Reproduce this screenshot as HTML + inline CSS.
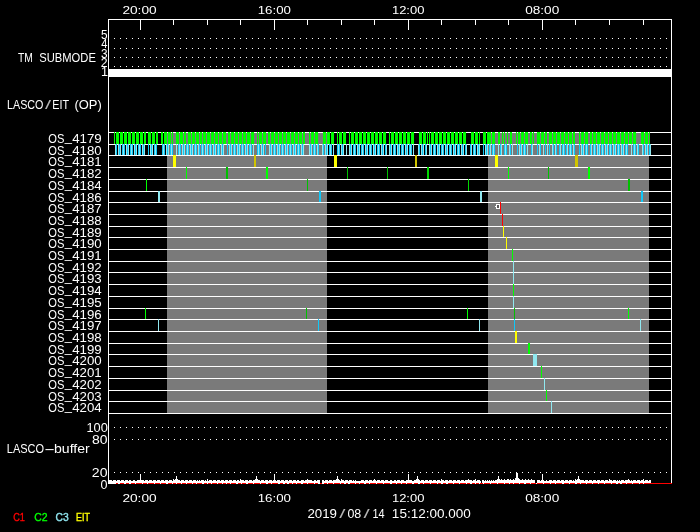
<!DOCTYPE html>
<html lang="en">
<head>
<meta charset="utf-8">
<title>LASCO/EIT operations timeline 2019/08/14</title>
<style>
html,body{margin:0;padding:0;background:#000;width:700px;height:532px;overflow:hidden}
svg text{white-space:pre}
</style>
</head>
<body>
<svg width="700" height="532" viewBox="0 0 700 532" style="display:block;position:absolute;left:0;top:0;will-change:transform">
<g shape-rendering="crispEdges">
<rect x="167" y="132" width="160" height="281" fill="#7a7a7a"/>
<rect x="488" y="132" width="161" height="281" fill="#7a7a7a"/>
<rect x="108" y="19" width="564" height="1" fill="#fff"/>
<rect x="108" y="19" width="1" height="465" fill="#fff"/>
<rect x="671" y="19" width="1" height="465" fill="#fff"/>
<rect x="140" y="19" width="1" height="11" fill="#fff"/>
<rect x="140" y="474" width="1" height="10" fill="#fff"/>
<rect x="173" y="19" width="1" height="6" fill="#fff"/>
<rect x="173" y="479" width="1" height="2" fill="#fff"/>
<rect x="207" y="19" width="1" height="6" fill="#fff"/>
<rect x="207" y="479" width="1" height="2" fill="#fff"/>
<rect x="240" y="19" width="1" height="6" fill="#fff"/>
<rect x="240" y="479" width="1" height="2" fill="#fff"/>
<rect x="274" y="19" width="1" height="11" fill="#fff"/>
<rect x="274" y="474" width="1" height="10" fill="#fff"/>
<rect x="307" y="19" width="1" height="6" fill="#fff"/>
<rect x="307" y="479" width="1" height="2" fill="#fff"/>
<rect x="341" y="19" width="1" height="6" fill="#fff"/>
<rect x="341" y="479" width="1" height="2" fill="#fff"/>
<rect x="374" y="19" width="1" height="6" fill="#fff"/>
<rect x="374" y="479" width="1" height="2" fill="#fff"/>
<rect x="408" y="19" width="1" height="11" fill="#fff"/>
<rect x="408" y="474" width="1" height="10" fill="#fff"/>
<rect x="441" y="19" width="1" height="6" fill="#fff"/>
<rect x="441" y="479" width="1" height="2" fill="#fff"/>
<rect x="475" y="19" width="1" height="6" fill="#fff"/>
<rect x="475" y="479" width="1" height="2" fill="#fff"/>
<rect x="508" y="19" width="1" height="6" fill="#fff"/>
<rect x="508" y="479" width="1" height="2" fill="#fff"/>
<rect x="542" y="19" width="1" height="11" fill="#fff"/>
<rect x="542" y="474" width="1" height="10" fill="#fff"/>
<rect x="575" y="19" width="1" height="6" fill="#fff"/>
<rect x="575" y="479" width="1" height="2" fill="#fff"/>
<rect x="609" y="19" width="1" height="6" fill="#fff"/>
<rect x="609" y="479" width="1" height="2" fill="#fff"/>
<rect x="643" y="19" width="1" height="6" fill="#fff"/>
<rect x="643" y="479" width="1" height="2" fill="#fff"/>
<path d="M114 38h1v1h-1zM120 38h1v1h-1zM126 38h1v1h-1zM132 38h1v1h-1zM138 38h1v1h-1zM144 38h1v1h-1zM150 38h1v1h-1zM156 38h1v1h-1zM162 38h1v1h-1zM168 38h1v1h-1zM174 38h1v1h-1zM180 38h1v1h-1zM186 38h1v1h-1zM192 38h1v1h-1zM198 38h1v1h-1zM204 38h1v1h-1zM210 38h1v1h-1zM216 38h1v1h-1zM222 38h1v1h-1zM228 38h1v1h-1zM234 38h1v1h-1zM240 38h1v1h-1zM246 38h1v1h-1zM252 38h1v1h-1zM258 38h1v1h-1zM264 38h1v1h-1zM270 38h1v1h-1zM276 38h1v1h-1zM282 38h1v1h-1zM288 38h1v1h-1zM294 38h1v1h-1zM300 38h1v1h-1zM306 38h1v1h-1zM312 38h1v1h-1zM318 38h1v1h-1zM324 38h1v1h-1zM330 38h1v1h-1zM336 38h1v1h-1zM342 38h1v1h-1zM348 38h1v1h-1zM354 38h1v1h-1zM360 38h1v1h-1zM366 38h1v1h-1zM372 38h1v1h-1zM378 38h1v1h-1zM384 38h1v1h-1zM390 38h1v1h-1zM396 38h1v1h-1zM402 38h1v1h-1zM408 38h1v1h-1zM414 38h1v1h-1zM420 38h1v1h-1zM426 38h1v1h-1zM432 38h1v1h-1zM438 38h1v1h-1zM444 38h1v1h-1zM450 38h1v1h-1zM456 38h1v1h-1zM462 38h1v1h-1zM468 38h1v1h-1zM474 38h1v1h-1zM480 38h1v1h-1zM486 38h1v1h-1zM492 38h1v1h-1zM498 38h1v1h-1zM504 38h1v1h-1zM510 38h1v1h-1zM516 38h1v1h-1zM522 38h1v1h-1zM528 38h1v1h-1zM534 38h1v1h-1zM540 38h1v1h-1zM546 38h1v1h-1zM552 38h1v1h-1zM558 38h1v1h-1zM564 38h1v1h-1zM570 38h1v1h-1zM576 38h1v1h-1zM582 38h1v1h-1zM588 38h1v1h-1zM594 38h1v1h-1zM600 38h1v1h-1zM606 38h1v1h-1zM612 38h1v1h-1zM618 38h1v1h-1zM624 38h1v1h-1zM630 38h1v1h-1zM636 38h1v1h-1zM642 38h1v1h-1zM648 38h1v1h-1zM654 38h1v1h-1zM660 38h1v1h-1zM666 38h1v1h-1z" fill="#fff"/>
<path d="M114 48h1v1h-1zM120 48h1v1h-1zM126 48h1v1h-1zM132 48h1v1h-1zM138 48h1v1h-1zM144 48h1v1h-1zM150 48h1v1h-1zM156 48h1v1h-1zM162 48h1v1h-1zM168 48h1v1h-1zM174 48h1v1h-1zM180 48h1v1h-1zM186 48h1v1h-1zM192 48h1v1h-1zM198 48h1v1h-1zM204 48h1v1h-1zM210 48h1v1h-1zM216 48h1v1h-1zM222 48h1v1h-1zM228 48h1v1h-1zM234 48h1v1h-1zM240 48h1v1h-1zM246 48h1v1h-1zM252 48h1v1h-1zM258 48h1v1h-1zM264 48h1v1h-1zM270 48h1v1h-1zM276 48h1v1h-1zM282 48h1v1h-1zM288 48h1v1h-1zM294 48h1v1h-1zM300 48h1v1h-1zM306 48h1v1h-1zM312 48h1v1h-1zM318 48h1v1h-1zM324 48h1v1h-1zM330 48h1v1h-1zM336 48h1v1h-1zM342 48h1v1h-1zM348 48h1v1h-1zM354 48h1v1h-1zM360 48h1v1h-1zM366 48h1v1h-1zM372 48h1v1h-1zM378 48h1v1h-1zM384 48h1v1h-1zM390 48h1v1h-1zM396 48h1v1h-1zM402 48h1v1h-1zM408 48h1v1h-1zM414 48h1v1h-1zM420 48h1v1h-1zM426 48h1v1h-1zM432 48h1v1h-1zM438 48h1v1h-1zM444 48h1v1h-1zM450 48h1v1h-1zM456 48h1v1h-1zM462 48h1v1h-1zM468 48h1v1h-1zM474 48h1v1h-1zM480 48h1v1h-1zM486 48h1v1h-1zM492 48h1v1h-1zM498 48h1v1h-1zM504 48h1v1h-1zM510 48h1v1h-1zM516 48h1v1h-1zM522 48h1v1h-1zM528 48h1v1h-1zM534 48h1v1h-1zM540 48h1v1h-1zM546 48h1v1h-1zM552 48h1v1h-1zM558 48h1v1h-1zM564 48h1v1h-1zM570 48h1v1h-1zM576 48h1v1h-1zM582 48h1v1h-1zM588 48h1v1h-1zM594 48h1v1h-1zM600 48h1v1h-1zM606 48h1v1h-1zM612 48h1v1h-1zM618 48h1v1h-1zM624 48h1v1h-1zM630 48h1v1h-1zM636 48h1v1h-1zM642 48h1v1h-1zM648 48h1v1h-1zM654 48h1v1h-1zM660 48h1v1h-1zM666 48h1v1h-1z" fill="#fff"/>
<path d="M114 57h1v1h-1zM120 57h1v1h-1zM126 57h1v1h-1zM132 57h1v1h-1zM138 57h1v1h-1zM144 57h1v1h-1zM150 57h1v1h-1zM156 57h1v1h-1zM162 57h1v1h-1zM168 57h1v1h-1zM174 57h1v1h-1zM180 57h1v1h-1zM186 57h1v1h-1zM192 57h1v1h-1zM198 57h1v1h-1zM204 57h1v1h-1zM210 57h1v1h-1zM216 57h1v1h-1zM222 57h1v1h-1zM228 57h1v1h-1zM234 57h1v1h-1zM240 57h1v1h-1zM246 57h1v1h-1zM252 57h1v1h-1zM258 57h1v1h-1zM264 57h1v1h-1zM270 57h1v1h-1zM276 57h1v1h-1zM282 57h1v1h-1zM288 57h1v1h-1zM294 57h1v1h-1zM300 57h1v1h-1zM306 57h1v1h-1zM312 57h1v1h-1zM318 57h1v1h-1zM324 57h1v1h-1zM330 57h1v1h-1zM336 57h1v1h-1zM342 57h1v1h-1zM348 57h1v1h-1zM354 57h1v1h-1zM360 57h1v1h-1zM366 57h1v1h-1zM372 57h1v1h-1zM378 57h1v1h-1zM384 57h1v1h-1zM390 57h1v1h-1zM396 57h1v1h-1zM402 57h1v1h-1zM408 57h1v1h-1zM414 57h1v1h-1zM420 57h1v1h-1zM426 57h1v1h-1zM432 57h1v1h-1zM438 57h1v1h-1zM444 57h1v1h-1zM450 57h1v1h-1zM456 57h1v1h-1zM462 57h1v1h-1zM468 57h1v1h-1zM474 57h1v1h-1zM480 57h1v1h-1zM486 57h1v1h-1zM492 57h1v1h-1zM498 57h1v1h-1zM504 57h1v1h-1zM510 57h1v1h-1zM516 57h1v1h-1zM522 57h1v1h-1zM528 57h1v1h-1zM534 57h1v1h-1zM540 57h1v1h-1zM546 57h1v1h-1zM552 57h1v1h-1zM558 57h1v1h-1zM564 57h1v1h-1zM570 57h1v1h-1zM576 57h1v1h-1zM582 57h1v1h-1zM588 57h1v1h-1zM594 57h1v1h-1zM600 57h1v1h-1zM606 57h1v1h-1zM612 57h1v1h-1zM618 57h1v1h-1zM624 57h1v1h-1zM630 57h1v1h-1zM636 57h1v1h-1zM642 57h1v1h-1zM648 57h1v1h-1zM654 57h1v1h-1zM660 57h1v1h-1zM666 57h1v1h-1z" fill="#fff"/>
<path d="M114 66h1v1h-1zM120 66h1v1h-1zM126 66h1v1h-1zM132 66h1v1h-1zM138 66h1v1h-1zM144 66h1v1h-1zM150 66h1v1h-1zM156 66h1v1h-1zM162 66h1v1h-1zM168 66h1v1h-1zM174 66h1v1h-1zM180 66h1v1h-1zM186 66h1v1h-1zM192 66h1v1h-1zM198 66h1v1h-1zM204 66h1v1h-1zM210 66h1v1h-1zM216 66h1v1h-1zM222 66h1v1h-1zM228 66h1v1h-1zM234 66h1v1h-1zM240 66h1v1h-1zM246 66h1v1h-1zM252 66h1v1h-1zM258 66h1v1h-1zM264 66h1v1h-1zM270 66h1v1h-1zM276 66h1v1h-1zM282 66h1v1h-1zM288 66h1v1h-1zM294 66h1v1h-1zM300 66h1v1h-1zM306 66h1v1h-1zM312 66h1v1h-1zM318 66h1v1h-1zM324 66h1v1h-1zM330 66h1v1h-1zM336 66h1v1h-1zM342 66h1v1h-1zM348 66h1v1h-1zM354 66h1v1h-1zM360 66h1v1h-1zM366 66h1v1h-1zM372 66h1v1h-1zM378 66h1v1h-1zM384 66h1v1h-1zM390 66h1v1h-1zM396 66h1v1h-1zM402 66h1v1h-1zM408 66h1v1h-1zM414 66h1v1h-1zM420 66h1v1h-1zM426 66h1v1h-1zM432 66h1v1h-1zM438 66h1v1h-1zM444 66h1v1h-1zM450 66h1v1h-1zM456 66h1v1h-1zM462 66h1v1h-1zM468 66h1v1h-1zM474 66h1v1h-1zM480 66h1v1h-1zM486 66h1v1h-1zM492 66h1v1h-1zM498 66h1v1h-1zM504 66h1v1h-1zM510 66h1v1h-1zM516 66h1v1h-1zM522 66h1v1h-1zM528 66h1v1h-1zM534 66h1v1h-1zM540 66h1v1h-1zM546 66h1v1h-1zM552 66h1v1h-1zM558 66h1v1h-1zM564 66h1v1h-1zM570 66h1v1h-1zM576 66h1v1h-1zM582 66h1v1h-1zM588 66h1v1h-1zM594 66h1v1h-1zM600 66h1v1h-1zM606 66h1v1h-1zM612 66h1v1h-1zM618 66h1v1h-1zM624 66h1v1h-1zM630 66h1v1h-1zM636 66h1v1h-1zM642 66h1v1h-1zM648 66h1v1h-1zM654 66h1v1h-1zM660 66h1v1h-1zM666 66h1v1h-1z" fill="#fff"/>
<path d="M114 427h1v1h-1zM120 427h1v1h-1zM126 427h1v1h-1zM132 427h1v1h-1zM138 427h1v1h-1zM144 427h1v1h-1zM150 427h1v1h-1zM156 427h1v1h-1zM162 427h1v1h-1zM168 427h1v1h-1zM174 427h1v1h-1zM180 427h1v1h-1zM186 427h1v1h-1zM192 427h1v1h-1zM198 427h1v1h-1zM204 427h1v1h-1zM210 427h1v1h-1zM216 427h1v1h-1zM222 427h1v1h-1zM228 427h1v1h-1zM234 427h1v1h-1zM240 427h1v1h-1zM246 427h1v1h-1zM252 427h1v1h-1zM258 427h1v1h-1zM264 427h1v1h-1zM270 427h1v1h-1zM276 427h1v1h-1zM282 427h1v1h-1zM288 427h1v1h-1zM294 427h1v1h-1zM300 427h1v1h-1zM306 427h1v1h-1zM312 427h1v1h-1zM318 427h1v1h-1zM324 427h1v1h-1zM330 427h1v1h-1zM336 427h1v1h-1zM342 427h1v1h-1zM348 427h1v1h-1zM354 427h1v1h-1zM360 427h1v1h-1zM366 427h1v1h-1zM372 427h1v1h-1zM378 427h1v1h-1zM384 427h1v1h-1zM390 427h1v1h-1zM396 427h1v1h-1zM402 427h1v1h-1zM408 427h1v1h-1zM414 427h1v1h-1zM420 427h1v1h-1zM426 427h1v1h-1zM432 427h1v1h-1zM438 427h1v1h-1zM444 427h1v1h-1zM450 427h1v1h-1zM456 427h1v1h-1zM462 427h1v1h-1zM468 427h1v1h-1zM474 427h1v1h-1zM480 427h1v1h-1zM486 427h1v1h-1zM492 427h1v1h-1zM498 427h1v1h-1zM504 427h1v1h-1zM510 427h1v1h-1zM516 427h1v1h-1zM522 427h1v1h-1zM528 427h1v1h-1zM534 427h1v1h-1zM540 427h1v1h-1zM546 427h1v1h-1zM552 427h1v1h-1zM558 427h1v1h-1zM564 427h1v1h-1zM570 427h1v1h-1zM576 427h1v1h-1zM582 427h1v1h-1zM588 427h1v1h-1zM594 427h1v1h-1zM600 427h1v1h-1zM606 427h1v1h-1zM612 427h1v1h-1zM618 427h1v1h-1zM624 427h1v1h-1zM630 427h1v1h-1zM636 427h1v1h-1zM642 427h1v1h-1zM648 427h1v1h-1zM654 427h1v1h-1zM660 427h1v1h-1zM666 427h1v1h-1z" fill="#fff"/>
<path d="M114 439h1v1h-1zM120 439h1v1h-1zM126 439h1v1h-1zM132 439h1v1h-1zM138 439h1v1h-1zM144 439h1v1h-1zM150 439h1v1h-1zM156 439h1v1h-1zM162 439h1v1h-1zM168 439h1v1h-1zM174 439h1v1h-1zM180 439h1v1h-1zM186 439h1v1h-1zM192 439h1v1h-1zM198 439h1v1h-1zM204 439h1v1h-1zM210 439h1v1h-1zM216 439h1v1h-1zM222 439h1v1h-1zM228 439h1v1h-1zM234 439h1v1h-1zM240 439h1v1h-1zM246 439h1v1h-1zM252 439h1v1h-1zM258 439h1v1h-1zM264 439h1v1h-1zM270 439h1v1h-1zM276 439h1v1h-1zM282 439h1v1h-1zM288 439h1v1h-1zM294 439h1v1h-1zM300 439h1v1h-1zM306 439h1v1h-1zM312 439h1v1h-1zM318 439h1v1h-1zM324 439h1v1h-1zM330 439h1v1h-1zM336 439h1v1h-1zM342 439h1v1h-1zM348 439h1v1h-1zM354 439h1v1h-1zM360 439h1v1h-1zM366 439h1v1h-1zM372 439h1v1h-1zM378 439h1v1h-1zM384 439h1v1h-1zM390 439h1v1h-1zM396 439h1v1h-1zM402 439h1v1h-1zM408 439h1v1h-1zM414 439h1v1h-1zM420 439h1v1h-1zM426 439h1v1h-1zM432 439h1v1h-1zM438 439h1v1h-1zM444 439h1v1h-1zM450 439h1v1h-1zM456 439h1v1h-1zM462 439h1v1h-1zM468 439h1v1h-1zM474 439h1v1h-1zM480 439h1v1h-1zM486 439h1v1h-1zM492 439h1v1h-1zM498 439h1v1h-1zM504 439h1v1h-1zM510 439h1v1h-1zM516 439h1v1h-1zM522 439h1v1h-1zM528 439h1v1h-1zM534 439h1v1h-1zM540 439h1v1h-1zM546 439h1v1h-1zM552 439h1v1h-1zM558 439h1v1h-1zM564 439h1v1h-1zM570 439h1v1h-1zM576 439h1v1h-1zM582 439h1v1h-1zM588 439h1v1h-1zM594 439h1v1h-1zM600 439h1v1h-1zM606 439h1v1h-1zM612 439h1v1h-1zM618 439h1v1h-1zM624 439h1v1h-1zM630 439h1v1h-1zM636 439h1v1h-1zM642 439h1v1h-1zM648 439h1v1h-1zM654 439h1v1h-1zM660 439h1v1h-1zM666 439h1v1h-1z" fill="#fff"/>
<path d="M114 472h1v1h-1zM120 472h1v1h-1zM126 472h1v1h-1zM132 472h1v1h-1zM138 472h1v1h-1zM144 472h1v1h-1zM150 472h1v1h-1zM156 472h1v1h-1zM162 472h1v1h-1zM168 472h1v1h-1zM174 472h1v1h-1zM180 472h1v1h-1zM186 472h1v1h-1zM192 472h1v1h-1zM198 472h1v1h-1zM204 472h1v1h-1zM210 472h1v1h-1zM216 472h1v1h-1zM222 472h1v1h-1zM228 472h1v1h-1zM234 472h1v1h-1zM240 472h1v1h-1zM246 472h1v1h-1zM252 472h1v1h-1zM258 472h1v1h-1zM264 472h1v1h-1zM270 472h1v1h-1zM276 472h1v1h-1zM282 472h1v1h-1zM288 472h1v1h-1zM294 472h1v1h-1zM300 472h1v1h-1zM306 472h1v1h-1zM312 472h1v1h-1zM318 472h1v1h-1zM324 472h1v1h-1zM330 472h1v1h-1zM336 472h1v1h-1zM342 472h1v1h-1zM348 472h1v1h-1zM354 472h1v1h-1zM360 472h1v1h-1zM366 472h1v1h-1zM372 472h1v1h-1zM378 472h1v1h-1zM384 472h1v1h-1zM390 472h1v1h-1zM396 472h1v1h-1zM402 472h1v1h-1zM408 472h1v1h-1zM414 472h1v1h-1zM420 472h1v1h-1zM426 472h1v1h-1zM432 472h1v1h-1zM438 472h1v1h-1zM444 472h1v1h-1zM450 472h1v1h-1zM456 472h1v1h-1zM462 472h1v1h-1zM468 472h1v1h-1zM474 472h1v1h-1zM480 472h1v1h-1zM486 472h1v1h-1zM492 472h1v1h-1zM498 472h1v1h-1zM504 472h1v1h-1zM510 472h1v1h-1zM516 472h1v1h-1zM522 472h1v1h-1zM528 472h1v1h-1zM534 472h1v1h-1zM540 472h1v1h-1zM546 472h1v1h-1zM552 472h1v1h-1zM558 472h1v1h-1zM564 472h1v1h-1zM570 472h1v1h-1zM576 472h1v1h-1zM582 472h1v1h-1zM588 472h1v1h-1zM594 472h1v1h-1zM600 472h1v1h-1zM606 472h1v1h-1zM612 472h1v1h-1zM618 472h1v1h-1zM624 472h1v1h-1zM630 472h1v1h-1zM636 472h1v1h-1zM642 472h1v1h-1zM648 472h1v1h-1zM654 472h1v1h-1zM660 472h1v1h-1zM666 472h1v1h-1z" fill="#fff"/>
<rect x="108" y="69" width="564" height="8" fill="#fff"/>
<rect x="108" y="132" width="564" height="1" fill="#fff"/>
<rect x="108" y="144" width="564" height="1" fill="#fff"/>
<rect x="108" y="155" width="564" height="1" fill="#fff"/>
<rect x="108" y="167" width="564" height="1" fill="#fff"/>
<rect x="108" y="179" width="564" height="1" fill="#fff"/>
<rect x="108" y="191" width="564" height="1" fill="#fff"/>
<rect x="108" y="202" width="564" height="1" fill="#fff"/>
<rect x="108" y="214" width="564" height="1" fill="#fff"/>
<rect x="108" y="226" width="564" height="1" fill="#fff"/>
<rect x="108" y="237" width="564" height="1" fill="#fff"/>
<rect x="108" y="249" width="564" height="1" fill="#fff"/>
<rect x="108" y="261" width="564" height="1" fill="#fff"/>
<rect x="108" y="272" width="564" height="1" fill="#fff"/>
<rect x="108" y="284" width="564" height="1" fill="#fff"/>
<rect x="108" y="296" width="564" height="1" fill="#fff"/>
<rect x="108" y="308" width="564" height="1" fill="#fff"/>
<rect x="108" y="319" width="564" height="1" fill="#fff"/>
<rect x="108" y="331" width="564" height="1" fill="#fff"/>
<rect x="108" y="343" width="564" height="1" fill="#fff"/>
<rect x="108" y="354" width="564" height="1" fill="#fff"/>
<rect x="108" y="366" width="564" height="1" fill="#fff"/>
<rect x="108" y="378" width="564" height="1" fill="#fff"/>
<rect x="108" y="390" width="564" height="1" fill="#fff"/>
<rect x="108" y="401" width="564" height="1" fill="#fff"/>
<rect x="108" y="413" width="564" height="1" fill="#fff"/>
<path d="M114 132h1v12h-1zM116 132h3v12h-3zM120 132h3v12h-3zM124 132h3v12h-3zM128 132h3v12h-3zM132 132h3v12h-3zM136 132h3v12h-3zM140 132h3v12h-3zM144 132h2v12h-2zM148 132h3v12h-3zM152 132h3v12h-3zM156 132h2v12h-2zM161 132h2v12h-2zM164 132h3v12h-3zM168 132h3v12h-3zM172 132h1v12h-1zM176 132h3v12h-3zM180 132h3v12h-3zM184 132h2v12h-2zM188 132h3v12h-3zM192 132h3v12h-3zM196 132h3v12h-3zM200 132h2v12h-2zM203 132h3v12h-3zM207 132h3v12h-3zM211 132h3v12h-3zM215 132h3v12h-3zM219 132h3v12h-3zM223 132h3v12h-3zM228 132h2v12h-2zM231 132h3v12h-3zM235 132h3v12h-3zM239 132h3v12h-3zM243 132h3v12h-3zM247 132h3v12h-3zM251 132h3v12h-3zM257 132h1v12h-1zM259 132h3v12h-3zM263 132h3v12h-3zM268 132h2v12h-2zM271 132h3v12h-3zM275 132h3v12h-3zM279 132h3v12h-3zM283 132h3v12h-3zM287 132h3v12h-3zM291 132h3v12h-3zM295 132h3v12h-3zM299 132h3v12h-3zM303 132h2v12h-2zM309 132h1v12h-1zM311 132h3v12h-3zM315 132h3v12h-3zM323 132h3v12h-3zM327 132h3v12h-3zM331 132h3v12h-3zM337 132h1v12h-1zM339 132h3v12h-3zM343 132h3v12h-3zM349 132h1v12h-1zM351 132h3v12h-3zM355 132h3v12h-3zM359 132h3v12h-3zM363 132h3v12h-3zM367 132h3v12h-3zM371 132h3v12h-3zM375 132h3v12h-3zM379 132h3v12h-3zM383 132h3v12h-3zM389 132h1v12h-1zM391 132h3v12h-3zM395 132h3v12h-3zM399 132h3v12h-3zM403 132h3v12h-3zM407 132h3v12h-3zM411 132h3v12h-3zM419 132h3v12h-3zM423 132h3v12h-3zM427 132h1v12h-1zM429 132h1v12h-1zM431 132h3v12h-3zM435 132h3v12h-3zM439 132h3v12h-3zM443 132h3v12h-3zM447 132h3v12h-3zM451 132h3v12h-3zM455 132h3v12h-3zM459 132h3v12h-3zM463 132h3v12h-3zM471 132h3v12h-3zM475 132h3v12h-3zM479 132h1v12h-1zM483 132h3v12h-3zM487 132h4v12h-4zM492 132h3v12h-3zM498 132h2v12h-2zM502 132h1v12h-1zM504 132h1v12h-1zM507 132h1v12h-1zM510 132h2v12h-2zM516 132h1v12h-1zM518 132h2v12h-2zM521 132h3v12h-3zM525 132h3v12h-3zM530 132h2v12h-2zM533 132h1v12h-1zM537 132h3v12h-3zM541 132h3v12h-3zM545 132h2v12h-2zM549 132h3v12h-3zM553 132h3v12h-3zM557 132h3v12h-3zM561 132h3v12h-3zM565 132h3v12h-3zM569 132h3v12h-3zM573 132h2v12h-2zM579 132h1v12h-1zM581 132h3v12h-3zM585 132h3v12h-3zM590 132h2v12h-2zM593 132h3v12h-3zM597 132h3v12h-3zM601 132h3v12h-3zM605 132h3v12h-3zM609 132h3v12h-3zM613 132h3v12h-3zM617 132h3v12h-3zM621 132h3v12h-3zM625 132h3v12h-3zM629 132h3v12h-3zM633 132h3v12h-3zM641 132h3v12h-3zM645 132h3v12h-3zM649 132h1v12h-1z" fill="#00ff00"/>
<path d="M115 144h1v11h-1zM118 144h1v11h-1zM120 144h1v11h-1zM123 144h1v11h-1zM126 144h1v11h-1zM128 144h1v11h-1zM131 144h1v11h-1zM134 144h1v11h-1zM136 144h1v11h-1zM139 144h1v11h-1zM142 144h1v11h-1zM144 144h1v11h-1zM150 144h1v11h-1zM152 144h1v11h-1zM155 144h1v11h-1zM163 144h1v11h-1zM166 144h1v11h-1zM168 144h1v11h-1zM171 144h1v11h-1zM176 144h1v11h-1zM179 144h1v11h-1zM182 144h1v11h-1zM184 144h1v11h-1zM187 144h1v11h-1zM190 144h1v11h-1zM192 144h1v11h-1zM195 144h1v11h-1zM198 144h1v11h-1zM202 144h1v11h-1zM205 144h1v11h-1zM207 144h1v11h-1zM210 144h1v11h-1zM213 144h1v11h-1zM215 144h1v11h-1zM218 144h1v11h-1zM221 144h1v11h-1zM223 144h1v11h-1zM229 144h1v11h-1zM231 144h1v11h-1zM234 144h1v11h-1zM237 144h1v11h-1zM239 144h1v11h-1zM242 144h1v11h-1zM245 144h1v11h-1zM247 144h1v11h-1zM250 144h1v11h-1zM253 144h1v11h-1zM258 144h1v11h-1zM261 144h1v11h-1zM263 144h1v11h-1zM269 144h1v11h-1zM271 144h1v11h-1zM274 144h1v11h-1zM277 144h1v11h-1zM279 144h1v11h-1zM282 144h1v11h-1zM285 144h1v11h-1zM287 144h1v11h-1zM290 144h1v11h-1zM293 144h1v11h-1zM295 144h1v11h-1zM298 144h1v11h-1zM301 144h1v11h-1zM303 144h1v11h-1zM309 144h1v11h-1zM311 144h1v11h-1zM314 144h1v11h-1zM317 144h1v11h-1zM322 144h1v11h-1zM325 144h1v11h-1zM327 144h1v11h-1zM330 144h1v11h-1zM333 144h1v11h-1zM338 144h1v11h-1zM341 144h1v11h-1zM343 144h1v11h-1zM346 144h1v11h-1zM349 144h1v11h-1zM351 144h1v11h-1zM354 144h1v11h-1zM357 144h1v11h-1zM359 144h1v11h-1zM362 144h1v11h-1zM365 144h1v11h-1zM367 144h1v11h-1zM370 144h1v11h-1zM373 144h1v11h-1zM375 144h1v11h-1zM378 144h1v11h-1zM381 144h1v11h-1zM383 144h1v11h-1zM386 144h1v11h-1zM389 144h1v11h-1zM391 144h1v11h-1zM394 144h1v11h-1zM397 144h1v11h-1zM399 144h1v11h-1zM402 144h1v11h-1zM405 144h1v11h-1zM407 144h1v11h-1zM410 144h1v11h-1zM413 144h1v11h-1zM418 144h1v11h-1zM421 144h1v11h-1zM423 144h1v11h-1zM426 144h1v11h-1zM429 144h1v11h-1zM431 144h1v11h-1zM434 144h1v11h-1zM437 144h1v11h-1zM439 144h1v11h-1zM442 144h1v11h-1zM445 144h1v11h-1zM447 144h1v11h-1zM450 144h1v11h-1zM453 144h1v11h-1zM455 144h1v11h-1zM458 144h1v11h-1zM461 144h1v11h-1zM463 144h1v11h-1zM466 144h1v11h-1zM471 144h1v11h-1zM474 144h1v11h-1zM477 144h1v11h-1zM479 144h1v11h-1zM485 144h1v11h-1zM487 144h1v11h-1zM490 144h1v11h-1zM493 144h1v11h-1zM498 144h1v11h-1zM501 144h1v11h-1zM505 144h1v11h-1zM509 144h1v11h-1zM512 144h1v11h-1zM519 144h1v11h-1zM521 144h1v11h-1zM524 144h1v11h-1zM527 144h1v11h-1zM532 144h1v11h-1zM539 144h1v11h-1zM543 144h1v11h-1zM547 144h1v11h-1zM552 144h1v11h-1zM555 144h1v11h-1zM560 144h1v11h-1zM563 144h1v11h-1zM567 144h1v11h-1zM570 144h1v11h-1zM573 144h1v11h-1zM581 144h1v11h-1zM583 144h1v11h-1zM586 144h1v11h-1zM591 144h1v11h-1zM594 144h1v11h-1zM597 144h1v11h-1zM599 144h1v11h-1zM602 144h1v11h-1zM605 144h1v11h-1zM607 144h1v11h-1zM610 144h1v11h-1zM613 144h1v11h-1zM615 144h1v11h-1zM618 144h1v11h-1zM621 144h1v11h-1zM623 144h1v11h-1zM626 144h1v11h-1zM631 144h1v11h-1zM634 144h1v11h-1zM637 144h1v11h-1zM642 144h1v11h-1zM645 144h1v11h-1zM647 144h1v11h-1zM650 144h1v11h-1z" fill="#90e8f0"/>
<path d="M116 144h1v11h-1zM119 144h1v11h-1zM122 144h1v11h-1zM124 144h1v11h-1zM127 144h1v11h-1zM130 144h1v11h-1zM132 144h1v11h-1zM135 144h1v11h-1zM138 144h1v11h-1zM140 144h1v11h-1zM143 144h1v11h-1zM148 144h1v11h-1zM151 144h1v11h-1zM154 144h1v11h-1zM156 144h1v11h-1zM162 144h1v11h-1zM164 144h1v11h-1zM167 144h1v11h-1zM170 144h1v11h-1zM172 144h1v11h-1zM178 144h1v11h-1zM180 144h1v11h-1zM183 144h1v11h-1zM186 144h1v11h-1zM188 144h1v11h-1zM191 144h1v11h-1zM194 144h1v11h-1zM196 144h1v11h-1zM199 144h1v11h-1zM201 144h1v11h-1zM203 144h1v11h-1zM206 144h1v11h-1zM209 144h1v11h-1zM211 144h1v11h-1zM214 144h1v11h-1zM217 144h1v11h-1zM219 144h1v11h-1zM222 144h1v11h-1zM227 144h1v11h-1zM230 144h1v11h-1zM233 144h1v11h-1zM235 144h1v11h-1zM238 144h1v11h-1zM241 144h1v11h-1zM243 144h1v11h-1zM246 144h1v11h-1zM249 144h1v11h-1zM251 144h1v11h-1zM257 144h1v11h-1zM259 144h1v11h-1zM262 144h1v11h-1zM265 144h1v11h-1zM270 144h1v11h-1zM273 144h1v11h-1zM275 144h1v11h-1zM278 144h1v11h-1zM281 144h1v11h-1zM283 144h1v11h-1zM286 144h1v11h-1zM289 144h1v11h-1zM291 144h1v11h-1zM294 144h1v11h-1zM297 144h1v11h-1zM299 144h1v11h-1zM302 144h1v11h-1zM310 144h1v11h-1zM313 144h1v11h-1zM315 144h1v11h-1zM318 144h1v11h-1zM323 144h1v11h-1zM326 144h1v11h-1zM329 144h1v11h-1zM331 144h1v11h-1zM337 144h1v11h-1zM339 144h1v11h-1zM342 144h1v11h-1zM350 144h1v11h-1zM353 144h1v11h-1zM355 144h1v11h-1zM358 144h1v11h-1zM361 144h1v11h-1zM363 144h1v11h-1zM366 144h1v11h-1zM369 144h1v11h-1zM371 144h1v11h-1zM374 144h1v11h-1zM377 144h1v11h-1zM379 144h1v11h-1zM382 144h1v11h-1zM385 144h1v11h-1zM390 144h1v11h-1zM393 144h1v11h-1zM395 144h1v11h-1zM398 144h1v11h-1zM401 144h1v11h-1zM403 144h1v11h-1zM406 144h1v11h-1zM409 144h1v11h-1zM411 144h1v11h-1zM419 144h1v11h-1zM422 144h1v11h-1zM425 144h1v11h-1zM430 144h1v11h-1zM433 144h1v11h-1zM435 144h1v11h-1zM438 144h1v11h-1zM441 144h1v11h-1zM443 144h1v11h-1zM446 144h1v11h-1zM449 144h1v11h-1zM451 144h1v11h-1zM454 144h1v11h-1zM457 144h1v11h-1zM459 144h1v11h-1zM462 144h1v11h-1zM465 144h1v11h-1zM470 144h1v11h-1zM473 144h1v11h-1zM475 144h1v11h-1zM478 144h1v11h-1zM483 144h1v11h-1zM486 144h1v11h-1zM489 144h1v11h-1zM492 144h1v11h-1zM494 144h1v11h-1zM500 144h1v11h-1zM504 144h1v11h-1zM506 144h1v11h-1zM510 144h1v11h-1zM517 144h1v11h-1zM520 144h1v11h-1zM523 144h1v11h-1zM525 144h1v11h-1zM531 144h1v11h-1zM537 144h1v11h-1zM540 144h1v11h-1zM545 144h1v11h-1zM549 144h1v11h-1zM553 144h1v11h-1zM556 144h1v11h-1zM559 144h1v11h-1zM562 144h1v11h-1zM564 144h1v11h-1zM566 144h1v11h-1zM569 144h1v11h-1zM571 144h1v11h-1zM574 144h1v11h-1zM579 144h1v11h-1zM582 144h1v11h-1zM585 144h1v11h-1zM587 144h1v11h-1zM590 144h1v11h-1zM593 144h1v11h-1zM595 144h1v11h-1zM598 144h1v11h-1zM601 144h1v11h-1zM603 144h1v11h-1zM606 144h1v11h-1zM609 144h1v11h-1zM611 144h1v11h-1zM614 144h1v11h-1zM617 144h1v11h-1zM619 144h1v11h-1zM622 144h1v11h-1zM625 144h1v11h-1zM627 144h1v11h-1zM633 144h1v11h-1zM635 144h1v11h-1zM638 144h1v11h-1zM643 144h1v11h-1zM646 144h1v11h-1zM649 144h1v11h-1z" fill="#10c8f8"/>
<rect x="173" y="155" width="3" height="12" fill="#ffff00"/>
<rect x="254" y="155" width="2" height="12" fill="#d0c400"/>
<rect x="334" y="155" width="3" height="12" fill="#ffff00"/>
<rect x="415" y="155" width="2" height="12" fill="#d0c400"/>
<rect x="495" y="155" width="3" height="12" fill="#ffff00"/>
<rect x="575" y="155" width="3" height="12" fill="#d0c400"/>
<rect x="186" y="167" width="1" height="12" fill="#00ff00"/>
<rect x="226" y="167" width="2" height="12" fill="#00c000"/>
<rect x="266" y="167" width="2" height="12" fill="#00ff00"/>
<rect x="347" y="167" width="1" height="12" fill="#00c000"/>
<rect x="387" y="167" width="1" height="12" fill="#00c000"/>
<rect x="427" y="167" width="2" height="12" fill="#00d800"/>
<rect x="508" y="167" width="1" height="12" fill="#00ff00"/>
<rect x="548" y="167" width="1" height="12" fill="#00c000"/>
<rect x="588" y="167" width="2" height="12" fill="#00ff00"/>
<rect x="146" y="179" width="1" height="12" fill="#00ff00"/>
<rect x="307" y="179" width="1" height="12" fill="#00c000"/>
<rect x="468" y="179" width="1" height="12" fill="#00d800"/>
<rect x="628" y="179" width="2" height="12" fill="#00c000"/>
<rect x="158" y="191" width="2" height="11" fill="#90e8f0"/>
<rect x="319" y="191" width="2" height="11" fill="#10c8f8"/>
<rect x="480" y="191" width="2" height="11" fill="#90e8f0"/>
<rect x="641" y="191" width="2" height="11" fill="#10c8f8"/>
<rect x="500" y="202" width="1" height="12" fill="#ff0000"/>
<rect x="502" y="214" width="1" height="12" fill="#ff0000"/>
<rect x="503" y="226" width="1" height="11" fill="#ffff00"/>
<rect x="506" y="237" width="1" height="12" fill="#ffff00"/>
<rect x="512" y="249" width="1" height="12" fill="#00ff00"/>
<rect x="513" y="261" width="1" height="11" fill="#90e8f0"/>
<rect x="513" y="272" width="1" height="12" fill="#90e8f0"/>
<rect x="513" y="284" width="1" height="12" fill="#00ff00"/>
<rect x="513" y="296" width="1" height="12" fill="#90e8f0"/>
<rect x="514" y="308" width="1" height="11" fill="#00c000"/>
<rect x="514" y="319" width="1" height="12" fill="#10c8f8"/>
<rect x="515" y="331" width="2" height="12" fill="#ffff00"/>
<rect x="528" y="343" width="2" height="11" fill="#00ff00"/>
<rect x="533" y="354" width="4" height="12" fill="#90e8f0"/>
<rect x="541" y="366" width="1" height="12" fill="#00ff00"/>
<rect x="544" y="378" width="1" height="12" fill="#90e8f0"/>
<rect x="546" y="390" width="1" height="11" fill="#00ff00"/>
<rect x="551" y="401" width="1" height="12" fill="#90e8f0"/>
<rect x="145" y="308" width="1" height="11" fill="#00ff00"/>
<rect x="306" y="308" width="1" height="11" fill="#00c000"/>
<rect x="467" y="308" width="1" height="11" fill="#00ff00"/>
<rect x="628" y="308" width="1" height="11" fill="#00ff00"/>
<rect x="158" y="319" width="1" height="12" fill="#90e8f0"/>
<rect x="318" y="319" width="1" height="12" fill="#10c8f8"/>
<rect x="479" y="319" width="1" height="12" fill="#90e8f0"/>
<rect x="640" y="319" width="1" height="12" fill="#90e8f0"/>
<path d="M496 204h4v5h-4z M495 206h1v1h-1z" fill="#fff"/>
<path d="M497 205h2v3h-2z" fill="#5a5a5a"/>
<path d="M109 480h1v3h-1zM110 480h1v3h-1zM111 480h1v3h-1zM112 481h1v2h-1zM113 480h1v3h-1zM114 480h1v3h-1zM115 480h1v3h-1zM116 481h1v2h-1zM117 480h1v3h-1zM118 480h1v3h-1zM119 480h1v3h-1zM120 481h1v2h-1zM121 480h1v3h-1zM122 480h1v3h-1zM123 480h1v3h-1zM124 481h1v2h-1zM125 480h1v3h-1zM126 480h1v3h-1zM127 480h1v3h-1zM128 481h1v2h-1zM129 480h1v3h-1zM130 480h1v3h-1zM131 481h1v2h-1zM132 481h1v2h-1zM133 480h1v3h-1zM134 480h1v3h-1zM135 481h1v2h-1zM136 481h1v2h-1zM137 480h1v3h-1zM138 480h1v3h-1zM139 480h1v3h-1zM140 481h1v2h-1zM141 480h1v3h-1zM142 480h1v3h-1zM143 480h1v3h-1zM144 481h1v2h-1zM145 480h1v3h-1zM146 480h1v3h-1zM147 480h1v3h-1zM148 481h1v2h-1zM149 480h1v3h-1zM150 480h1v3h-1zM151 480h1v3h-1zM152 481h1v2h-1zM153 480h1v3h-1zM154 480h1v3h-1zM155 480h1v3h-1zM156 481h1v2h-1zM157 480h1v3h-1zM158 480h1v3h-1zM159 480h1v3h-1zM160 481h1v2h-1zM161 480h1v3h-1zM162 480h1v3h-1zM163 480h1v3h-1zM164 481h1v2h-1zM165 480h1v3h-1zM166 480h1v3h-1zM167 480h1v3h-1zM168 481h1v2h-1zM169 480h1v3h-1zM170 480h1v3h-1zM171 480h1v3h-1zM172 481h1v2h-1zM173 480h1v3h-1zM174 480h1v3h-1zM175 479h1v4h-1zM176 476h1v7h-1zM177 479h1v4h-1zM178 480h1v3h-1zM179 480h1v3h-1zM180 481h1v2h-1zM181 480h1v3h-1zM182 480h1v3h-1zM183 480h1v3h-1zM184 481h1v2h-1zM185 480h1v3h-1zM186 480h1v3h-1zM187 480h1v3h-1zM188 481h1v2h-1zM189 480h1v3h-1zM190 480h1v3h-1zM191 480h1v3h-1zM192 481h1v2h-1zM193 480h1v3h-1zM194 480h1v3h-1zM195 480h1v3h-1zM196 481h1v2h-1zM197 480h1v3h-1zM198 481h1v2h-1zM199 480h1v3h-1zM200 481h1v2h-1zM201 480h1v3h-1zM202 480h1v3h-1zM203 480h1v3h-1zM204 481h1v2h-1zM205 480h1v3h-1zM206 481h1v2h-1zM207 480h1v3h-1zM208 481h1v2h-1zM209 480h1v3h-1zM210 480h1v3h-1zM211 480h1v3h-1zM212 481h1v2h-1zM213 480h1v3h-1zM214 480h1v3h-1zM215 480h1v3h-1zM216 481h1v2h-1zM217 480h1v3h-1zM218 480h1v3h-1zM219 480h1v3h-1zM220 481h1v2h-1zM221 480h1v3h-1zM222 480h1v3h-1zM223 480h1v3h-1zM224 481h1v2h-1zM225 480h1v3h-1zM226 480h1v3h-1zM227 480h1v3h-1zM228 481h1v2h-1zM229 480h1v3h-1zM230 480h1v3h-1zM231 480h1v3h-1zM232 481h1v2h-1zM233 480h1v3h-1zM234 480h1v3h-1zM235 480h1v3h-1zM236 481h1v2h-1zM237 480h1v3h-1zM238 480h1v3h-1zM239 481h1v2h-1zM240 481h1v2h-1zM241 480h1v3h-1zM242 480h1v3h-1zM243 480h1v3h-1zM244 481h1v2h-1zM245 480h1v3h-1zM246 480h1v3h-1zM247 480h1v3h-1zM248 481h1v2h-1zM249 480h1v3h-1zM250 480h1v3h-1zM251 480h1v3h-1zM252 481h1v2h-1zM253 480h1v3h-1zM254 480h1v3h-1zM255 479h1v4h-1zM256 476h1v7h-1zM257 479h1v4h-1zM258 480h1v3h-1zM259 480h1v3h-1zM260 481h1v2h-1zM261 480h1v3h-1zM262 480h1v3h-1zM263 480h1v3h-1zM264 481h1v2h-1zM265 480h1v3h-1zM266 480h1v3h-1zM267 480h1v3h-1zM268 481h1v2h-1zM269 480h1v3h-1zM270 480h1v3h-1zM271 480h1v3h-1zM272 481h1v2h-1zM273 480h1v3h-1zM274 480h1v3h-1zM275 480h1v3h-1zM276 481h1v2h-1zM277 480h1v3h-1zM278 480h1v3h-1zM279 480h1v3h-1zM280 481h1v2h-1zM281 480h1v3h-1zM282 480h1v3h-1zM283 480h1v3h-1zM284 481h1v2h-1zM285 480h1v3h-1zM286 480h1v3h-1zM287 480h1v3h-1zM288 481h1v2h-1zM289 480h1v3h-1zM290 480h1v3h-1zM291 480h1v3h-1zM292 481h1v2h-1zM293 480h1v3h-1zM294 480h1v3h-1zM295 480h1v3h-1zM296 481h1v2h-1zM297 480h1v3h-1zM298 480h1v3h-1zM299 481h1v2h-1zM300 481h1v2h-1zM301 480h1v3h-1zM302 480h1v3h-1zM303 480h1v3h-1zM304 481h1v2h-1zM305 480h1v3h-1zM306 480h1v3h-1zM307 479h1v4h-1zM308 480h1v3h-1zM309 480h1v3h-1zM310 480h1v3h-1zM311 480h1v3h-1zM312 481h1v2h-1zM313 481h1v2h-1zM314 480h1v3h-1zM315 480h1v3h-1zM316 481h1v2h-1zM317 480h1v3h-1zM318 480h1v3h-1zM319 480h1v3h-1zM322 480h1v3h-1zM323 480h1v3h-1zM324 481h1v2h-1zM325 480h1v3h-1zM326 480h1v3h-1zM327 480h1v3h-1zM328 481h1v2h-1zM329 480h1v3h-1zM330 480h1v3h-1zM331 480h1v3h-1zM332 481h1v2h-1zM333 480h1v3h-1zM334 480h1v3h-1zM335 480h1v3h-1zM336 479h1v4h-1zM337 476h1v7h-1zM338 479h1v4h-1zM339 480h1v3h-1zM340 481h1v2h-1zM341 480h1v3h-1zM342 480h1v3h-1zM343 480h1v3h-1zM344 481h1v2h-1zM345 480h1v3h-1zM346 480h1v3h-1zM347 480h1v3h-1zM348 481h1v2h-1zM349 480h1v3h-1zM350 480h1v3h-1zM351 480h1v3h-1zM352 481h1v2h-1zM353 480h1v3h-1zM354 481h1v2h-1zM355 480h1v3h-1zM356 481h1v2h-1zM357 481h1v2h-1zM358 481h1v2h-1zM359 481h1v2h-1zM360 481h1v2h-1zM361 480h1v3h-1zM362 480h1v3h-1zM363 480h1v3h-1zM364 481h1v2h-1zM365 480h1v3h-1zM366 480h1v3h-1zM367 480h1v3h-1zM368 481h1v2h-1zM369 480h1v3h-1zM370 480h1v3h-1zM371 480h1v3h-1zM372 481h1v2h-1zM373 480h1v3h-1zM374 480h1v3h-1zM375 480h1v3h-1zM376 481h1v2h-1zM377 480h1v3h-1zM378 480h1v3h-1zM379 480h1v3h-1zM380 481h1v2h-1zM381 480h1v3h-1zM382 480h1v3h-1zM383 480h1v3h-1zM384 481h1v2h-1zM385 480h1v3h-1zM386 480h1v3h-1zM387 480h1v3h-1zM388 481h1v2h-1zM389 481h1v2h-1zM390 480h1v3h-1zM391 480h1v3h-1zM392 481h1v2h-1zM393 481h1v2h-1zM394 480h1v3h-1zM395 480h1v3h-1zM396 481h1v2h-1zM397 480h1v3h-1zM398 480h1v3h-1zM399 480h1v3h-1zM400 481h1v2h-1zM401 480h1v3h-1zM402 480h1v3h-1zM403 480h1v3h-1zM404 481h1v2h-1zM405 481h1v2h-1zM406 480h1v3h-1zM407 480h1v3h-1zM408 481h1v2h-1zM409 480h1v3h-1zM410 480h1v3h-1zM411 480h1v3h-1zM412 481h1v2h-1zM413 481h1v2h-1zM414 480h1v3h-1zM415 480h1v3h-1zM416 479h1v4h-1zM417 476h1v7h-1zM418 479h1v4h-1zM419 480h1v3h-1zM420 481h1v2h-1zM421 480h1v3h-1zM422 480h1v3h-1zM423 480h1v3h-1zM424 481h1v2h-1zM425 480h1v3h-1zM426 480h1v3h-1zM427 480h1v3h-1zM428 481h1v2h-1zM429 480h1v3h-1zM430 480h1v3h-1zM431 480h1v3h-1zM432 481h1v2h-1zM433 480h1v3h-1zM434 480h1v3h-1zM435 480h1v3h-1zM436 481h1v2h-1zM437 480h1v3h-1zM438 480h1v3h-1zM439 480h1v3h-1zM440 481h1v2h-1zM441 480h1v3h-1zM442 480h1v3h-1zM443 480h1v3h-1zM444 481h1v2h-1zM445 480h1v3h-1zM446 480h1v3h-1zM447 480h1v3h-1zM448 481h1v2h-1zM449 480h1v3h-1zM450 480h1v3h-1zM451 480h1v3h-1zM452 481h1v2h-1zM453 480h1v3h-1zM454 480h1v3h-1zM455 480h1v3h-1zM456 481h1v2h-1zM457 480h1v3h-1zM458 480h1v3h-1zM459 480h1v3h-1zM460 481h1v2h-1zM461 480h1v3h-1zM462 480h1v3h-1zM463 480h1v3h-1zM464 481h1v2h-1zM465 480h1v3h-1zM466 480h1v3h-1zM467 480h1v3h-1zM468 479h1v4h-1zM469 480h1v3h-1zM470 480h1v3h-1zM471 480h1v3h-1zM472 481h1v2h-1zM473 480h1v3h-1zM474 480h1v3h-1zM475 480h1v3h-1zM476 481h1v2h-1zM477 480h1v3h-1zM478 480h1v3h-1zM479 480h1v3h-1zM480 481h1v2h-1zM482 480h1v3h-1zM483 480h1v3h-1zM484 481h1v2h-1zM485 480h1v3h-1zM486 481h1v2h-1zM487 480h1v3h-1zM488 481h1v2h-1zM489 480h1v3h-1zM490 481h1v2h-1zM491 480h1v3h-1zM492 481h1v2h-1zM493 480h1v3h-1zM494 481h1v2h-1zM495 480h1v3h-1zM496 480h1v3h-1zM497 479h1v4h-1zM498 476h1v7h-1zM499 479h1v4h-1zM500 480h1v3h-1zM501 479h1v4h-1zM502 480h1v3h-1zM503 480h1v3h-1zM504 479h1v4h-1zM505 480h1v3h-1zM506 480h1v3h-1zM507 479h1v4h-1zM508 480h1v3h-1zM509 480h1v3h-1zM510 479h1v4h-1zM511 480h1v3h-1zM512 480h1v3h-1zM513 479h1v4h-1zM514 480h1v3h-1zM515 478h1v5h-1zM516 472h1v11h-1zM517 473h1v10h-1zM518 478h1v5h-1zM519 479h1v4h-1zM520 480h1v3h-1zM521 480h1v3h-1zM522 479h1v4h-1zM523 480h1v3h-1zM524 480h1v3h-1zM525 479h1v4h-1zM526 480h1v3h-1zM527 480h1v3h-1zM528 479h1v4h-1zM529 480h1v3h-1zM530 480h1v3h-1zM531 479h1v4h-1zM532 480h1v3h-1zM533 480h1v3h-1zM534 480h1v3h-1zM537 480h1v3h-1zM538 480h1v3h-1zM539 480h1v3h-1zM540 481h1v2h-1zM541 480h1v3h-1zM542 480h1v3h-1zM543 480h1v3h-1zM544 481h1v2h-1zM545 481h1v2h-1zM546 480h1v3h-1zM547 481h1v2h-1zM548 481h1v2h-1zM549 480h1v3h-1zM550 480h1v3h-1zM551 480h1v3h-1zM552 481h1v2h-1zM553 480h1v3h-1zM554 480h1v3h-1zM555 480h1v3h-1zM556 481h1v2h-1zM557 480h1v3h-1zM558 480h1v3h-1zM559 480h1v3h-1zM560 481h1v2h-1zM561 480h1v3h-1zM562 480h1v3h-1zM563 480h1v3h-1zM564 481h1v2h-1zM565 480h1v3h-1zM566 480h1v3h-1zM567 480h1v3h-1zM568 481h1v2h-1zM569 480h1v3h-1zM570 480h1v3h-1zM571 480h1v3h-1zM572 481h1v2h-1zM573 480h1v3h-1zM574 481h1v2h-1zM575 480h1v3h-1zM576 480h1v3h-1zM577 479h1v4h-1zM578 476h1v7h-1zM579 479h1v4h-1zM580 480h1v3h-1zM581 480h1v3h-1zM582 480h1v3h-1zM583 480h1v3h-1zM584 481h1v2h-1zM585 480h1v3h-1zM586 480h1v3h-1zM587 480h1v3h-1zM588 481h1v2h-1zM589 480h1v3h-1zM590 480h1v3h-1zM591 480h1v3h-1zM592 481h1v2h-1zM593 480h1v3h-1zM594 480h1v3h-1zM595 480h1v3h-1zM596 481h1v2h-1zM597 480h1v3h-1zM598 480h1v3h-1zM599 480h1v3h-1zM600 481h1v2h-1zM601 480h1v3h-1zM602 480h1v3h-1zM603 480h1v3h-1zM604 481h1v2h-1zM605 480h1v3h-1zM606 480h1v3h-1zM607 480h1v3h-1zM608 481h1v2h-1zM609 480h1v3h-1zM610 480h1v3h-1zM611 480h1v3h-1zM612 481h1v2h-1zM613 480h1v3h-1zM614 480h1v3h-1zM615 480h1v3h-1zM616 481h1v2h-1zM617 480h1v3h-1zM618 481h1v2h-1zM619 480h1v3h-1zM620 481h1v2h-1zM621 480h1v3h-1zM622 480h1v3h-1zM623 480h1v3h-1zM624 481h1v2h-1zM625 480h1v3h-1zM626 480h1v3h-1zM627 480h1v3h-1zM628 479h1v4h-1zM629 480h1v3h-1zM630 481h1v2h-1zM631 480h1v3h-1zM632 481h1v2h-1zM633 480h1v3h-1zM634 480h1v3h-1zM635 480h1v3h-1zM636 481h1v2h-1zM637 480h1v3h-1zM638 480h1v3h-1zM639 480h1v3h-1zM640 481h1v2h-1zM641 480h1v3h-1zM642 480h1v3h-1zM643 480h1v3h-1zM644 481h1v2h-1zM645 480h1v3h-1zM646 480h1v3h-1zM647 480h1v3h-1zM648 481h1v2h-1zM649 480h1v3h-1zM650 480h1v3h-1z" fill="#fff"/>
<rect x="115" y="483" width="557" height="1" fill="#ff0000"/>
<path d="M118 483h2v1h-2zM124 483h2v1h-2zM129 483h2v1h-2zM135 483h1v1h-1zM142 483h1v1h-1zM147 483h1v1h-1zM154 483h1v1h-1zM160 483h1v1h-1zM166 483h2v1h-2zM172 483h1v1h-1zM176 483h1v1h-1zM181 483h1v1h-1zM186 483h1v1h-1zM192 483h1v1h-1zM196 483h1v1h-1zM202 483h2v1h-2zM207 483h1v1h-1zM211 483h1v1h-1zM217 483h1v1h-1zM222 483h1v1h-1zM226 483h1v1h-1zM230 483h1v1h-1zM236 483h2v1h-2zM241 483h1v1h-1zM246 483h2v1h-2zM253 483h1v1h-1zM260 483h1v1h-1zM266 483h2v1h-2zM271 483h1v1h-1zM278 483h2v1h-2zM283 483h2v1h-2zM287 483h2v1h-2zM292 483h1v1h-1zM296 483h1v1h-1zM301 483h2v1h-2zM307 483h1v1h-1zM314 483h1v1h-1zM318 483h2v1h-2zM322 483h2v1h-2zM327 483h1v1h-1zM333 483h1v1h-1zM340 483h1v1h-1zM344 483h2v1h-2zM348 483h2v1h-2zM355 483h1v1h-1zM359 483h1v1h-1zM364 483h2v1h-2zM369 483h1v1h-1zM376 483h1v1h-1zM383 483h1v1h-1zM390 483h2v1h-2zM396 483h1v1h-1zM401 483h1v1h-1zM406 483h1v1h-1zM412 483h2v1h-2zM418 483h2v1h-2zM423 483h1v1h-1zM430 483h1v1h-1zM437 483h1v1h-1zM441 483h2v1h-2zM446 483h2v1h-2zM453 483h1v1h-1zM459 483h1v1h-1zM466 483h1v1h-1zM470 483h2v1h-2zM475 483h1v1h-1zM479 483h1v1h-1zM483 483h1v1h-1zM490 483h1v1h-1zM497 483h1v1h-1zM504 483h1v1h-1zM509 483h1v1h-1zM513 483h1v1h-1zM519 483h1v1h-1zM524 483h2v1h-2zM530 483h1v1h-1zM536 483h1v1h-1zM543 483h1v1h-1zM550 483h1v1h-1zM555 483h1v1h-1zM562 483h2v1h-2zM569 483h1v1h-1zM575 483h2v1h-2zM580 483h1v1h-1zM586 483h1v1h-1zM592 483h1v1h-1zM598 483h1v1h-1zM604 483h1v1h-1zM611 483h1v1h-1zM616 483h2v1h-2zM620 483h2v1h-2zM626 483h1v1h-1zM632 483h1v1h-1zM639 483h1v1h-1zM643 483h1v1h-1z" fill="#fff"/>
<rect x="108" y="481" width="8" height="3" fill="#fff"/>
</g>
<g font-family="'Liberation Sans', sans-serif" font-size="13" fill="#fff">
<text font-size="11.6"><tspan x="122.41" y="14.1" textLength="34.22" lengthAdjust="spacingAndGlyphs">20:00</tspan></text>
<text font-size="11.6"><tspan x="122.41" y="502.1" textLength="34.22" lengthAdjust="spacingAndGlyphs">20:00</tspan></text>
<text font-size="11.6"><tspan x="257.69" y="14.1" textLength="33.23" lengthAdjust="spacingAndGlyphs">16:00</tspan></text>
<text font-size="11.6"><tspan x="257.69" y="502.1" textLength="33.23" lengthAdjust="spacingAndGlyphs">16:00</tspan></text>
<text font-size="11.6"><tspan x="391.91" y="14.1" textLength="32.5" lengthAdjust="spacingAndGlyphs">12:00</tspan></text>
<text font-size="11.6"><tspan x="391.91" y="502.1" textLength="32.5" lengthAdjust="spacingAndGlyphs">12:00</tspan></text>
<text font-size="11.6"><tspan x="525.17" y="14.1" textLength="34.06" lengthAdjust="spacingAndGlyphs">08:00</tspan></text>
<text font-size="11.6"><tspan x="525.17" y="502.1" textLength="34.06" lengthAdjust="spacingAndGlyphs">08:00</tspan></text>
<text><tspan x="100.93" y="39.0" textLength="6.57" lengthAdjust="spacingAndGlyphs">5</tspan></text>
<text><tspan x="101.14" y="48.2" textLength="6.18" lengthAdjust="spacingAndGlyphs">4</tspan></text>
<text><tspan x="100.95" y="57.5" textLength="6.57" lengthAdjust="spacingAndGlyphs">3</tspan></text>
<text><tspan x="100.78" y="66.8" textLength="6.84" lengthAdjust="spacingAndGlyphs">2</tspan></text>
<text x="100.9" y="76.0" textLength="7" lengthAdjust="spacingAndGlyphs">1</text>
<text><tspan x="18.07" y="62.4" textLength="14.88" lengthAdjust="spacingAndGlyphs">TM</tspan> <tspan x="39.19" y="62.4" textLength="56.69" lengthAdjust="spacingAndGlyphs">SUBMODE</tspan></text>
<text><tspan x="7.02" y="108.9" textLength="36.39" lengthAdjust="spacingAndGlyphs">LASCO</tspan><tspan x="44.9" y="108.9" fill="#b4b4b4" textLength="6.1" lengthAdjust="spacingAndGlyphs">/</tspan><tspan x="52.22" y="108.9" textLength="16.62" lengthAdjust="spacingAndGlyphs">EIT</tspan> <tspan x="74.5" y="108.9" textLength="27.3" lengthAdjust="spacingAndGlyphs">(OP)</tspan></text>
<text y="143.0"><tspan x="48.37" textLength="16.14" lengthAdjust="spacingAndGlyphs">OS</tspan><tspan x="64.69" dy="-2" textLength="7.16" lengthAdjust="spacingAndGlyphs">_</tspan><tspan x="72.2" dy="2" textLength="29.53" lengthAdjust="spacingAndGlyphs">4179</tspan></text>
<text y="154.5"><tspan x="48.37" textLength="16.14" lengthAdjust="spacingAndGlyphs">OS</tspan><tspan x="64.69" dy="-2" textLength="7.16" lengthAdjust="spacingAndGlyphs">_</tspan><tspan x="72.2" dy="2" textLength="29.53" lengthAdjust="spacingAndGlyphs">4180</tspan></text>
<text y="166.0"><tspan x="48.37" textLength="16.14" lengthAdjust="spacingAndGlyphs">OS</tspan><tspan x="64.69" dy="-2" textLength="7.16" lengthAdjust="spacingAndGlyphs">_</tspan><tspan x="72.2" dy="2" textLength="29.53" lengthAdjust="spacingAndGlyphs">4181</tspan></text>
<text y="178.0"><tspan x="48.37" textLength="16.14" lengthAdjust="spacingAndGlyphs">OS</tspan><tspan x="64.69" dy="-2" textLength="7.16" lengthAdjust="spacingAndGlyphs">_</tspan><tspan x="72.2" dy="2" textLength="29.53" lengthAdjust="spacingAndGlyphs">4182</tspan></text>
<text y="190.0"><tspan x="48.37" textLength="16.14" lengthAdjust="spacingAndGlyphs">OS</tspan><tspan x="64.69" dy="-2" textLength="7.16" lengthAdjust="spacingAndGlyphs">_</tspan><tspan x="72.2" dy="2" textLength="29.53" lengthAdjust="spacingAndGlyphs">4184</tspan></text>
<text y="201.5"><tspan x="48.37" textLength="16.14" lengthAdjust="spacingAndGlyphs">OS</tspan><tspan x="64.69" dy="-2" textLength="7.16" lengthAdjust="spacingAndGlyphs">_</tspan><tspan x="72.2" dy="2" textLength="29.53" lengthAdjust="spacingAndGlyphs">4186</tspan></text>
<text y="213.0"><tspan x="48.37" textLength="16.14" lengthAdjust="spacingAndGlyphs">OS</tspan><tspan x="64.69" dy="-2" textLength="7.16" lengthAdjust="spacingAndGlyphs">_</tspan><tspan x="72.2" dy="2" textLength="29.53" lengthAdjust="spacingAndGlyphs">4187</tspan></text>
<text y="225.0"><tspan x="48.37" textLength="16.14" lengthAdjust="spacingAndGlyphs">OS</tspan><tspan x="64.69" dy="-2" textLength="7.16" lengthAdjust="spacingAndGlyphs">_</tspan><tspan x="72.2" dy="2" textLength="29.53" lengthAdjust="spacingAndGlyphs">4188</tspan></text>
<text y="236.5"><tspan x="48.37" textLength="16.14" lengthAdjust="spacingAndGlyphs">OS</tspan><tspan x="64.69" dy="-2" textLength="7.16" lengthAdjust="spacingAndGlyphs">_</tspan><tspan x="72.2" dy="2" textLength="29.53" lengthAdjust="spacingAndGlyphs">4189</tspan></text>
<text y="248.0"><tspan x="48.37" textLength="16.14" lengthAdjust="spacingAndGlyphs">OS</tspan><tspan x="64.69" dy="-2" textLength="7.16" lengthAdjust="spacingAndGlyphs">_</tspan><tspan x="72.2" dy="2" textLength="29.53" lengthAdjust="spacingAndGlyphs">4190</tspan></text>
<text y="260.0"><tspan x="48.37" textLength="16.14" lengthAdjust="spacingAndGlyphs">OS</tspan><tspan x="64.69" dy="-2" textLength="7.16" lengthAdjust="spacingAndGlyphs">_</tspan><tspan x="72.2" dy="2" textLength="29.53" lengthAdjust="spacingAndGlyphs">4191</tspan></text>
<text y="271.5"><tspan x="48.37" textLength="16.14" lengthAdjust="spacingAndGlyphs">OS</tspan><tspan x="64.69" dy="-2" textLength="7.16" lengthAdjust="spacingAndGlyphs">_</tspan><tspan x="72.2" dy="2" textLength="29.53" lengthAdjust="spacingAndGlyphs">4192</tspan></text>
<text y="283.0"><tspan x="48.37" textLength="16.14" lengthAdjust="spacingAndGlyphs">OS</tspan><tspan x="64.69" dy="-2" textLength="7.16" lengthAdjust="spacingAndGlyphs">_</tspan><tspan x="72.2" dy="2" textLength="29.53" lengthAdjust="spacingAndGlyphs">4193</tspan></text>
<text y="295.0"><tspan x="48.37" textLength="16.14" lengthAdjust="spacingAndGlyphs">OS</tspan><tspan x="64.69" dy="-2" textLength="7.16" lengthAdjust="spacingAndGlyphs">_</tspan><tspan x="72.2" dy="2" textLength="29.53" lengthAdjust="spacingAndGlyphs">4194</tspan></text>
<text y="307.0"><tspan x="48.37" textLength="16.14" lengthAdjust="spacingAndGlyphs">OS</tspan><tspan x="64.69" dy="-2" textLength="7.16" lengthAdjust="spacingAndGlyphs">_</tspan><tspan x="72.2" dy="2" textLength="29.53" lengthAdjust="spacingAndGlyphs">4195</tspan></text>
<text y="318.5"><tspan x="48.37" textLength="16.14" lengthAdjust="spacingAndGlyphs">OS</tspan><tspan x="64.69" dy="-2" textLength="7.16" lengthAdjust="spacingAndGlyphs">_</tspan><tspan x="72.2" dy="2" textLength="29.53" lengthAdjust="spacingAndGlyphs">4196</tspan></text>
<text y="330.0"><tspan x="48.37" textLength="16.14" lengthAdjust="spacingAndGlyphs">OS</tspan><tspan x="64.69" dy="-2" textLength="7.16" lengthAdjust="spacingAndGlyphs">_</tspan><tspan x="72.2" dy="2" textLength="29.53" lengthAdjust="spacingAndGlyphs">4197</tspan></text>
<text y="342.0"><tspan x="48.37" textLength="16.14" lengthAdjust="spacingAndGlyphs">OS</tspan><tspan x="64.69" dy="-2" textLength="7.16" lengthAdjust="spacingAndGlyphs">_</tspan><tspan x="72.2" dy="2" textLength="29.53" lengthAdjust="spacingAndGlyphs">4198</tspan></text>
<text y="353.5"><tspan x="48.37" textLength="16.14" lengthAdjust="spacingAndGlyphs">OS</tspan><tspan x="64.69" dy="-2" textLength="7.16" lengthAdjust="spacingAndGlyphs">_</tspan><tspan x="72.2" dy="2" textLength="29.53" lengthAdjust="spacingAndGlyphs">4199</tspan></text>
<text y="365.0"><tspan x="48.37" textLength="16.14" lengthAdjust="spacingAndGlyphs">OS</tspan><tspan x="64.69" dy="-2" textLength="7.16" lengthAdjust="spacingAndGlyphs">_</tspan><tspan x="72.2" dy="2" textLength="29.53" lengthAdjust="spacingAndGlyphs">4200</tspan></text>
<text y="377.0"><tspan x="48.37" textLength="16.14" lengthAdjust="spacingAndGlyphs">OS</tspan><tspan x="64.69" dy="-2" textLength="7.16" lengthAdjust="spacingAndGlyphs">_</tspan><tspan x="72.2" dy="2" textLength="29.53" lengthAdjust="spacingAndGlyphs">4201</tspan></text>
<text y="389.0"><tspan x="48.37" textLength="16.14" lengthAdjust="spacingAndGlyphs">OS</tspan><tspan x="64.69" dy="-2" textLength="7.16" lengthAdjust="spacingAndGlyphs">_</tspan><tspan x="72.2" dy="2" textLength="29.53" lengthAdjust="spacingAndGlyphs">4202</tspan></text>
<text y="400.5"><tspan x="48.37" textLength="16.14" lengthAdjust="spacingAndGlyphs">OS</tspan><tspan x="64.69" dy="-2" textLength="7.16" lengthAdjust="spacingAndGlyphs">_</tspan><tspan x="72.2" dy="2" textLength="29.53" lengthAdjust="spacingAndGlyphs">4203</tspan></text>
<text y="412.0"><tspan x="48.37" textLength="16.14" lengthAdjust="spacingAndGlyphs">OS</tspan><tspan x="64.69" dy="-2" textLength="7.16" lengthAdjust="spacingAndGlyphs">_</tspan><tspan x="72.2" dy="2" textLength="29.53" lengthAdjust="spacingAndGlyphs">4204</tspan></text>
<text><tspan x="6.8" y="453.2" textLength="37.23" lengthAdjust="spacingAndGlyphs">LASCO</tspan><tspan x="44.11" y="453.2" textLength="11.18" lengthAdjust="spacingAndGlyphs">-</tspan><tspan x="54.0" y="453.2" textLength="35.73" lengthAdjust="spacingAndGlyphs">buffer</tspan></text>
<text x="86.4" y="432.3" textLength="21.4" lengthAdjust="spacingAndGlyphs">100</text>
<text><tspan x="91.99" y="444.3" textLength="15.55" lengthAdjust="spacingAndGlyphs">80</tspan></text>
<text><tspan x="91.89" y="477.3" textLength="15.66" lengthAdjust="spacingAndGlyphs">20</tspan></text>
<text><tspan x="100.51" y="488.6" textLength="6.98" lengthAdjust="spacingAndGlyphs">0</tspan></text>
<text><tspan x="307.43" y="518.2" textLength="29.6" lengthAdjust="spacingAndGlyphs">2019</tspan><tspan x="339.2" y="518.2" fill="#b4b4b4" textLength="6.2" lengthAdjust="spacingAndGlyphs">/</tspan><tspan x="347.41" y="518.2" textLength="13.83" lengthAdjust="spacingAndGlyphs">08</tspan><tspan x="363.4" y="518.2" fill="#b4b4b4" textLength="6.2" lengthAdjust="spacingAndGlyphs">/</tspan><tspan x="372.47" y="518.2" textLength="12.15" lengthAdjust="spacingAndGlyphs">14</tspan> <tspan x="391.87" y="518.2" textLength="78.96" lengthAdjust="spacingAndGlyphs">15:12:00.000</tspan></text>
<text fill="#ff0000" stroke="#ff0000" stroke-width="0.35" font-size="10"><tspan x="13.23" y="520.8" textLength="11.71" lengthAdjust="spacingAndGlyphs">C1</tspan></text>
<text fill="#00ff00" stroke="#00ff00" stroke-width="0.35" font-size="10"><tspan x="34.27" y="520.8" textLength="13.36" lengthAdjust="spacingAndGlyphs">C2</tspan></text>
<text fill="#8fe4ee" stroke="#8fe4ee" stroke-width="0.35" font-size="10"><tspan x="55.48" y="520.8" textLength="13.18" lengthAdjust="spacingAndGlyphs">C3</tspan></text>
<text fill="#ffff00" stroke="#ffff00" stroke-width="0.35" font-size="10"><tspan x="76.07" y="520.8" textLength="13.83" lengthAdjust="spacingAndGlyphs">EIT</tspan></text>
</g>
</svg>
</body>
</html>
